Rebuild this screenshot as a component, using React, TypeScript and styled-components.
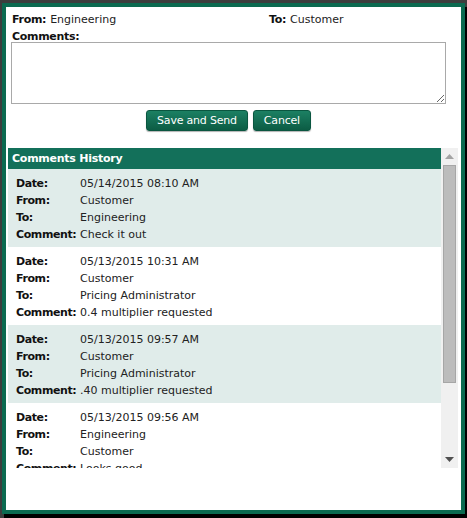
import React from 'react';
import styled, { createGlobalStyle } from 'styled-components';

const GlobalStyle = createGlobalStyle`
  html, body {
    margin: 0;
    padding: 0;
    background: #3d3d3d;
  }
  body {
    font-family: "DejaVu Sans", Verdana, sans-serif;
    font-size: 11px;
    color: #222;
  }
`;

const Backdrop = styled.div`
  width: 467px;
  height: 518px;
  padding: 3px 2px 0 2px;
  box-sizing: border-box;
`;

const Dialog = styled.div`
  width: 463px;
  height: 511px;
  box-sizing: border-box;
  border: 4px solid #0b6a50;
  background: #fff;
  box-shadow: 2px 4px 0 #000;
  padding: 4px 3px 0 2px;
`;

const InfoRow = styled.div`
  display: grid;
  grid-template-columns: 257px 1fr;
  padding-left: 4px;
  line-height: 18px;
`;

const Label = styled.span`
  font-weight: bold;
  color: #111;
  margin-right: 4px;
  letter-spacing: -0.3px;
`;

const CommentsLabel = styled.div`
  margin-top: 2px;
  padding-left: 4px;
  font-weight: bold;
  color: #111;
  line-height: 11px;
  letter-spacing: -0.3px;
`;

const TextArea = styled.textarea`
  display: block;
  margin: 0 0 0 3px;
  width: 435px;
  height: 62px;
  box-sizing: border-box;
  border: 1px solid #a9a9a9;
  font-family: inherit;
  font-size: 11px;
`;

const ButtonRow = styled.div`
  display: flex;
  justify-content: center;
  gap: 5px;
  width: 435px;
  margin: 6px 0 0 3px;
`;

const Button = styled.button`
  height: 21px;
  padding: 0 10px;
  border: 1px solid #0a5640;
  border-radius: 3px;
  background: linear-gradient(to bottom, #1c8063, #0c5c44);
  color: #fff;
  font-family: inherit;
  font-size: 11px;
  letter-spacing: -0.2px;
  box-shadow: 0 1px 1px rgba(0, 0, 0, 0.3);
  cursor: pointer;
`;

const History = styled.div`
  display: flex;
  margin-top: 17px;
  width: 450px;
  height: 320px;
`;

const HistoryList = styled.div`
  flex: 1;
  overflow: hidden;
`;

const HistoryHeader = styled.div`
  height: 21px;
  line-height: 21px;
  padding-left: 4px;
  background: #13705a;
  color: #fff;
  font-weight: bold;
  letter-spacing: -0.25px;
`;

const Entry = styled.div<{ $shaded: boolean }>`
  display: grid;
  grid-template-columns: 64px 1fr;
  padding: 6px 0 4px 8px;
  line-height: 17px;
  background: ${p => (p.$shaded ? '#e0ecea' : '#fff')};
`;

const EntryLabel = styled.div`
  font-weight: bold;
  color: #111;
  letter-spacing: -0.4px;
`;

const EntryValue = styled.div`
  color: #222;
  white-space: nowrap;
`;

const Scrollbar = styled.div`
  display: flex;
  flex-direction: column;
  width: 17px;
  background: #f0f0f0;
`;

const ScrollArrow = styled.div`
  display: flex;
  align-items: center;
  justify-content: center;
  height: 17px;
`;

const ScrollTrack = styled.div`
  flex: 1;
  padding: 0 2px;
`;

const ScrollThumb = styled.div<{ $size: number }>`
  height: ${p => p.$size}px;
  box-sizing: border-box;
  background: #bcbcbc;
  border: 1px solid #a6a6a6;
`;

const comments = [
  { date: '05/14/2015 08:10 AM', from: 'Customer', to: 'Engineering', comment: 'Check it out' },
  { date: '05/13/2015 10:31 AM', from: 'Customer', to: 'Pricing Administrator', comment: '0.4 multiplier requested' },
  { date: '05/13/2015 09:57 AM', from: 'Customer', to: 'Pricing Administrator', comment: '.40 multiplier requested' },
  { date: '05/13/2015 09:56 AM', from: 'Engineering', to: 'Customer', comment: 'Looks good' },
  { date: '05/13/2015 09:41 AM', from: 'Customer', to: 'Engineering', comment: 'Please review' },
];

const App: React.FC = () => {
  return (
    <>
      <GlobalStyle />
      <Backdrop>
        <Dialog>
          <InfoRow>
            <div><Label>From:</Label>Engineering</div>
            <div><Label>To:</Label>Customer</div>
          </InfoRow>
          <CommentsLabel>Comments:</CommentsLabel>
          <TextArea />
          <ButtonRow>
            <Button>Save and Send</Button>
            <Button>Cancel</Button>
          </ButtonRow>
          <History>
            <HistoryList>
              <HistoryHeader>Comments History</HistoryHeader>
              {comments.map((c, i) => (
                <Entry key={i} $shaded={i % 2 === 0}>
                  <EntryLabel>Date:</EntryLabel>
                  <EntryValue>{c.date}</EntryValue>
                  <EntryLabel>From:</EntryLabel>
                  <EntryValue>{c.from}</EntryValue>
                  <EntryLabel>To:</EntryLabel>
                  <EntryValue>{c.to}</EntryValue>
                  <EntryLabel>Comment:</EntryLabel>
                  <EntryValue>{c.comment}</EntryValue>
                </Entry>
              ))}
            </HistoryList>
            <Scrollbar>
              <ScrollArrow>
                <svg width="9" height="5" viewBox="0 0 9 5">
                  <polygon points="0,5 9,5 4.5,0" fill="#a3a3a3" />
                </svg>
              </ScrollArrow>
              <ScrollTrack>
                <ScrollThumb $size={218} />
              </ScrollTrack>
              <ScrollArrow>
                <svg width="9" height="5" viewBox="0 0 9 5">
                  <polygon points="0,0 9,0 4.5,5" fill="#505050" />
                </svg>
              </ScrollArrow>
            </Scrollbar>
          </History>
        </Dialog>
      </Backdrop>
    </>
  );
};

export default App;
